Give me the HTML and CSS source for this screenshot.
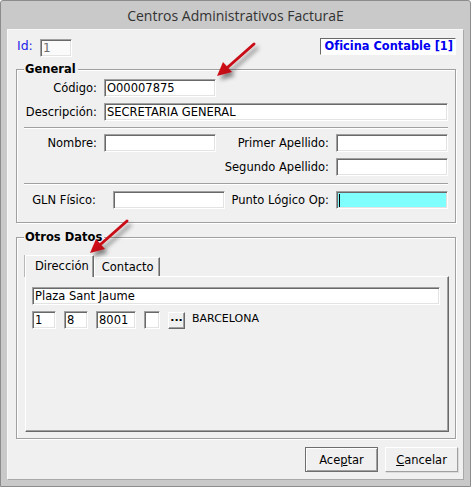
FILE: index.html
```html
<!DOCTYPE html>
<html lang="es">
<head>
    <meta charset="UTF-8">
    <title>Centros Administrativos FacturaE</title>
    <link rel="stylesheet" href="styles.css">
</head>
<body>
    <div class="window">
        <div class="titlebar">Centros Administrativos FacturaE</div>
        <div class="client">
            <div class="top-row">
                <span class="id-label">Id:</span>
                <input class="field id-field" type="text" value="1" disabled>
                <span class="office">Oficina Contable [1]</span>
            </div>

            <div class="group general">
                <div class="legend">General</div>
                <div class="row first">
                    <label class="lbl">Código:</label>
                    <input class="field w112" type="text" value="O00007875">
                </div>
                <div class="row gap6">
                    <label class="lbl">Descripción:</label>
                    <input class="field w344" type="text" value="SECRETARIA GENERAL">
                </div>
                <div class="sep sep-a"></div>
                <div class="row gap5">
                    <label class="lbl">Nombre:</label>
                    <input class="field w112" type="text">
                    <label class="lbl-right">Primer Apellido:</label>
                    <input class="field w112" type="text">
                </div>
                <div class="row gap6">
                    <span class="spacer"></span>
                    <label class="lbl-right">Segundo Apellido:</label>
                    <input class="field w112" type="text">
                </div>
                <div class="sep sep-b"></div>
                <div class="row gap6">
                    <label class="lbl lbl-gln">GLN Físico:</label>
                    <input class="field w112" type="text">
                    <label class="lbl-right lbl-punto">Punto Lógico Op:</label>
                    <div class="field w112 cyan"><span class="caret"></span></div>
                </div>
            </div>

            <div class="group otros">
                <div class="legend">Otros Datos</div>
                <div class="tabs">
                    <div class="tab active">Dirección</div>
                    <div class="tab">Contacto</div>
                </div>
                <div class="tab-panel">
                    <input class="field address" type="text" value="Plaza Sant Jaume">
                    <div class="addr-row">
                        <input class="field w24" type="text" value="1">
                        <input class="field w24" type="text" value="8">
                        <input class="field w40" type="text" value="8001">
                        <input class="field w16" type="text">
                        <button class="dots" type="button">...</button>
                        <span class="city">BARCELONA</span>
                    </div>
                </div>
            </div>

            <div class="actions">
                <button class="btn default" type="button">Ace<u>p</u>tar</button>
                <button class="btn" type="button"><u>C</u>ancelar</button>
            </div>
        </div>

        <!-- red pointer arrows over the form -->
        <svg class="marks" width="471" height="487" viewBox="0 0 471 487">
            <defs>
                <filter id="drop" x="-50%" y="-50%" width="200%" height="200%">
                    <feDropShadow dx="3" dy="4" stdDeviation="2" flood-color="#000" flood-opacity="0.45"/>
                </filter>
                <linearGradient id="red" x1="0" y1="0" x2="1" y2="1">
                    <stop offset="0" stop-color="#e0141c"/>
                    <stop offset="1" stop-color="#b00a10"/>
                </linearGradient>
            </defs>
            <g filter="url(#drop)">
                <line x1="254" y1="44" x2="228" y2="67" stroke="url(#red)" stroke-width="3" stroke-linecap="round"/>
                <polygon points="217,76 232,72 223,62" fill="url(#red)"/>
            </g>
            <g filter="url(#drop)" transform="translate(-127 177)">
                <line x1="254" y1="44" x2="228" y2="67" stroke="url(#red)" stroke-width="3" stroke-linecap="round"/>
                <polygon points="217,76 232,72 223,62" fill="url(#red)"/>
            </g>
        </svg>
    </div>
</body>
</html>
```

FILE: styles.css
```css
body {
    margin: 0;
    background: #fff;
    font-family: "DejaVu Sans", Verdana, sans-serif;
    font-size: 11.5px;
    color: #000;
}

.window {
    position: relative;
    width: 471px;
    height: 487px;
    box-sizing: border-box;
    background: #c9c9c9;
    border: 1px solid #8c8c8c;
    border-radius: 3px 3px 0 0;
    padding: 0 6px 6px;
}

.titlebar {
    height: 28px;
    line-height: 29px;
    text-align: center;
    font-family: "Open Sans", "Noto Sans", sans-serif;
    font-size: 14px;
    color: #333;
}

.client {
    width: 457px;
    height: 451px;
    box-sizing: border-box;
    border: 1px solid #a8a8a8;
    border-top-color: #f8f8f8;
    border-left-color: #f8f8f8;
    background: #f0f0f0;
}

/* text boxes */
.field {
    box-sizing: border-box;
    height: 18px;
    margin: 0;
    padding: 0 2px;
    border: 1px solid;
    border-color: #a0a0a0 #fff #fff #a0a0a0;
    box-shadow: inset 1px 1px #696969, inset -1px -1px #e3e3e3;
    background: #fff;
    font-family: inherit;
    font-size: 11.5px;
    color: #000;
    outline: none;
}

.w16 { width: 16px; }
.w24 { width: 24px; }
.w40 { width: 40px; }
.w112 { width: 112px; }
.w344 { width: 344px; }

.top-row {
    display: flex;
    align-items: flex-start;
    height: 20px;
    margin-top: 8px;
    padding-left: 9px;
}

.id-label {
    width: 23px;
    line-height: 14px;
    margin-top: 1px;
    font-size: 12.5px;
    color: #2323e6;
}

.id-field {
    width: 32px;
    margin-top: 1px;
    background: #fafafa;
    color: #6d6d6d;
    font-size: 12px;
}

.office {
    box-sizing: border-box;
    width: 136px;
    height: 17px;
    margin-left: auto;
    margin-right: 7px;
    padding-right: 2px;
    text-align: right;
    line-height: 15px;
    font-weight: bold;
    font-size: 11.4px;
    color: #0000f0;
    background: #fff;
    border: 1px solid;
    border-color: #696969 #fff #fff #696969;
}

/* group boxes */
.group {
    box-sizing: border-box;
    width: 440px;
    margin-left: 8px;
    border: 1px solid #a0a0a0;
    box-shadow: inset 1px 1px #fff, 1px 1px #fff;
}

.general {
    height: 154px;
    margin-top: 11px;
}

.otros {
    height: 202px;
    margin-top: 14px;
}

.legend {
    width: max-content;
    margin: -8px 0 0 7px;
    padding: 0 2px 0 1px;
    line-height: 14px;
    font-weight: bold;
    background: #f0f0f0;
}

.row {
    display: flex;
    align-items: center;
    height: 18px;
}

.row.first { margin-top: 3px; }
.row.gap5 { margin-top: 5px; }
.row.gap6 { margin-top: 6px; }

.lbl {
    width: 80px;
    margin-right: 7px;
    text-align: right;
}

.lbl-gln {
    width: 79px;
    margin-right: 17px;
}

.lbl-right {
    width: 113px;
    margin-right: 7px;
    text-align: right;
}

.lbl-punto { width: 104px; }

.spacer { width: 199px; }

.sep {
    width: 424px;
    height: 1px;
    margin-left: 7px;
    background: #a0a0a0;
    border-bottom: 1px solid #fff;
}

.sep-a { margin-top: 6px; }
.sep-b { margin-top: 7px; }

.cyan {
    display: flex;
    align-items: center;
    background: #80ffff;
}

.caret {
    width: 1px;
    height: 13px;
    background: #000;
}

/* tab control */
.tabs {
    display: flex;
    align-items: flex-end;
    height: 21px;
    margin: 11px 0 0 8px;
}

.tab {
    box-sizing: border-box;
    height: 19px;
    padding: 0 5px 0 7px;
    line-height: 18px;
    border: 1px solid;
    border-bottom: none;
    border-color: #fff #696969 #fff #fff;
    box-shadow: inset -1px 0 #a0a0a0, -1px 0 #b8b8b8;
    background: #f0f0f0;
}

.tab.active {
    position: relative;
    z-index: 1;
    height: 22px;
    margin-bottom: -1px;
    padding: 0 4px 0 9px;
    line-height: 20px;
}

.tab-panel {
    box-sizing: border-box;
    width: 424px;
    height: 156px;
    margin-left: 8px;
    padding: 10px 0 0 6px;
    border: 1px solid;
    border-color: #fff #696969 #696969 #fff;
    box-shadow: inset -1px -1px #a0a0a0;
}

.address {
    display: block;
    width: 408px;
}

.addr-row {
    display: flex;
    align-items: center;
    gap: 8px;
    margin-top: 6px;
}

.dots {
    box-sizing: border-box;
    width: 17px;
    height: 17px;
    padding: 0 0 4px;
    font-family: inherit;
    font-size: 11px;
    font-weight: bold;
    line-height: 10px;
    background: #f0f0f0;
    border: 1px solid;
    border-color: #fff #696969 #696969 #fff;
    box-shadow: inset -1px -1px #a0a0a0;
}

.city {
    margin-left: -1px;
    margin-top: -3px;
    font-size: 11px;
}

/* dialog buttons */
.actions {
    display: flex;
    justify-content: flex-end;
    gap: 7px;
    margin-top: 8px;
    padding-right: 5px;
}

.btn {
    box-sizing: border-box;
    width: 73px;
    height: 25px;
    padding: 0;
    font-family: inherit;
    font-size: 11.5px;
    color: #000;
    background: #f0f0f0;
    border: 1px solid;
    border-color: #fff #a0a0a0 #a0a0a0 #fff;
    box-shadow: 1px 1px #dcdcdc;
}

.btn.default {
    border-color: #6e6e6e;
    box-shadow: inset 1px 1px #fff, inset -1px -1px #a0a0a0;
}

.marks {
    position: absolute;
    left: -1px;
    top: -1px;
    pointer-events: none;
}
```
